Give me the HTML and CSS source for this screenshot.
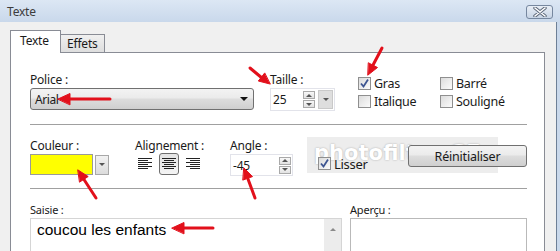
FILE: index.html
```html
<!DOCTYPE html>
<html lang="fr">
<head>
    <meta charset="UTF-8">
    <title>Texte</title>
    <link rel="stylesheet" href="styles.css">
</head>
<body>
    <div class="window">
        <div class="titlebar">
            <span class="title">Texte</span>
            <span class="close">
                <svg width="14" height="10" viewBox="0 0 14 10">
                    <path d="M2 1 L12 9 M12 1 L2 9" stroke="#5a6678" stroke-width="3.4" stroke-linecap="round"/>
                    <path d="M2 1 L12 9 M12 1 L2 9" stroke="#fff" stroke-width="1.6" stroke-linecap="round"/>
                </svg>
            </span>
        </div>
        <div class="tabs">
            <div class="tab active">Texte</div>
            <div class="tab">Effets</div>
        </div>
        <div class="panel">
            <div class="row row-top">
                <div class="field police">
                    <div class="label">Police :</div>
                    <div class="combo"><span>Arial</span><span class="caret"></span></div>
                </div>
                <div class="field taille">
                    <div class="label">Taille :</div>
                    <div class="spinbox">
                        <span class="value">25</span>
                        <span class="spin">
                            <span class="spin-btn"><span class="tri up"></span></span>
                            <span class="spin-btn"><span class="tri down"></span></span>
                        </span>
                        <span class="drop-btn"><span class="tri down"></span></span>
                    </div>
                </div>
                <div class="checks">
                    <div class="check-col">
                        <div class="check"><span class="box"><svg width="11" height="11" viewBox="0 0 11 11"><path d="M2 5.5 L4.5 8.5 L9 1.5" fill="none" stroke="#3d5591" stroke-width="1.8"/></svg></span>Gras</div>
                        <div class="check"><span class="box"></span>Italique</div>
                    </div>
                    <div class="check-col">
                        <div class="check"><span class="box"></span>Barré</div>
                        <div class="check"><span class="box"></span>Souligné</div>
                    </div>
                </div>
            </div>
            <div class="sep"></div>
            <div class="row row-mid">
                <div class="field couleur">
                    <div class="label">Couleur :</div>
                    <div class="color-pick">
                        <span class="swatch"></span>
                        <span class="color-btn"><span class="tri down"></span></span>
                    </div>
                </div>
                <div class="field align">
                    <div class="label">Alignement :</div>
                    <div class="align-btns">
                        <span class="align-btn">
                            <svg width="14" height="12" viewBox="0 0 14 12"><path d="M0 .5h14M0 2.5h10M0 4.5h14M0 6.5h10M0 8.5h14M0 10.5h10" stroke="#222"/></svg>
                        </span>
                        <span class="align-btn pressed">
                            <svg width="14" height="12" viewBox="0 0 14 12"><path d="M0 .5h14M2 2.5h10M0 4.5h14M2 6.5h10M0 8.5h14M2 10.5h10" stroke="#222"/></svg>
                        </span>
                        <span class="align-btn">
                            <svg width="14" height="12" viewBox="0 0 14 12"><path d="M0 .5h14M4 2.5h10M0 4.5h14M4 6.5h10M0 8.5h14M4 10.5h10" stroke="#222"/></svg>
                        </span>
                    </div>
                </div>
                <div class="field angle">
                    <div class="label">Angle :</div>
                    <div class="spinbox angle-box">
                        <span class="value">-45</span>
                        <span class="spin">
                            <span class="spin-btn"><span class="tri up"></span></span>
                            <span class="spin-btn"><span class="tri down"></span></span>
                        </span>
                    </div>
                </div>
                <div class="check lisser"><span class="box"><svg width="11" height="11" viewBox="0 0 11 11"><path d="M2 5.5 L4.5 8.5 L9 1.5" fill="none" stroke="#3d5591" stroke-width="1.8"/></svg></span>Lisser</div>
                <div class="button">Réinitialiser</div>
            </div>
            <div class="sep sep2"></div>
            <div class="row row-bottom">
                <div class="field saisie">
                    <div class="label small">Saisie :</div>
                    <div class="textarea">
                        <span class="text">coucou les enfants</span>
                        <span class="scrollbar"><span class="tri up"></span></span>
                    </div>
                </div>
                <div class="field apercu">
                    <div class="label small">Aperçu :</div>
                    <div class="preview"></div>
                </div>
            </div>
        </div>
        <div class="frame"></div>

        <!-- filigrane -->
        <div class="watermark">photofiltre-GE</div>

        <!-- fleches rouges -->
        <svg class="arrows" width="560" height="251" viewBox="0 0 560 251">
            <g stroke="#e2101b" stroke-width="3" stroke-linecap="round" fill="#e2101b">
                <line x1="110" y1="99" x2="68" y2="99"/>
                <polygon points="58,99 70,93.5 70,104.5" stroke-width="1"/>
                <line x1="250" y1="68" x2="262" y2="78"/>
                <polygon points="270,84 258.3,81 264.5,73.2" stroke-width="1"/>
                <line x1="382" y1="48" x2="372" y2="67"/>
                <polygon points="368,75 377.5,67.5 368.6,62.9" stroke-width="1"/>
                <line x1="96" y1="198" x2="83" y2="178"/>
                <polygon points="78,170 88.2,176.5 79.8,182" stroke-width="1"/>
                <line x1="255" y1="198" x2="248" y2="179"/>
                <polygon points="244,168 252.5,176.6 243.1,180" stroke-width="1"/>
                <line x1="213" y1="228" x2="182" y2="228"/>
                <polygon points="172,228 184,222.5 184,233.5" stroke-width="1"/>
            </g>
        </svg>
    </div>
</body>
</html>
```

FILE: styles.css
```css
*{
    padding: 0;
    margin: 0;
    box-sizing: border-box;
}
body{
    background: #f0f0f0;
    font-family: "Noto Sans", "DejaVu Sans", sans-serif;
    font-size: 12px;
    letter-spacing: -0.2px;
    color: #1a1a1a;
}
.window{
    position: relative;
    width: 560px;
    height: 251px;
    overflow: hidden;
    background: #f0f0f0;
}

/* barre de titre */
.titlebar{
    display: flex;
    align-items: center;
    justify-content: space-between;
    height: 22px;
    padding: 0 7px 0 7px;
    background: linear-gradient(#dce7f4, #c9d8eb);
}
.titlebar .title{
    color: #3c3c3c;
    line-height: 15px;
}
.titlebar .close{
    display: flex;
    align-items: center;
    justify-content: center;
    width: 27px;
    height: 14px;
    margin-top: 2px;
    border: 1px solid #76879f;
    border-radius: 3px;
    background: linear-gradient(#e8eef6, #c7d4e5);
}

/* onglets */
.tabs{
    display: flex;
    align-items: flex-end;
    height: 30px;
    padding-left: 10px;
}
.tab{
    height: 18px;
    width: 44px;
    padding-left: 6px;
    line-height: 17px;
    border: 1px solid #898c95;
    border-left: none;
    border-bottom: none;
    background: linear-gradient(#f0f0f0, #dedede);
}
.tab.active{
    position: relative;
    z-index: 1;
    width: 51px;
    height: 23px;
    margin-bottom: -1px;
    padding-left: 9px;
    line-height: 19px;
    border-left: 1px solid #898c95;
    background: #fff;
}

/* panneau */
.panel{
    width: 535px;
    height: 200px;
    margin-left: 10px;
    padding: 19px 17px 0 19px;
    border: 1px solid #898c95;
    border-bottom: none;
    background: #fff;
}
.row{
    display: flex;
    align-items: flex-start;
}
.row-top{
    height: 39px;
}
.row-mid{
    height: 36px;
}
.label{
    height: 15px;
    line-height: 15px;
    margin-bottom: 1px;
    white-space: nowrap;
}
.label.small{
    font-size: 11px;
}
.tri{
    display: block;
    width: 0;
    height: 0;
    border-left: 3px solid transparent;
    border-right: 3px solid transparent;
}
.tri.down{
    border-top: 3px solid #555;
}
.tri.up{
    border-bottom: 3px solid #555;
}

/* police */
.police{
    width: 224px;
}
.combo{
    display: flex;
    align-items: center;
    justify-content: space-between;
    height: 22px;
    padding: 0 5px 0 4px;
    border: 1px solid #707070;
    border-radius: 3px;
    letter-spacing: -0.4px;
    background: linear-gradient(#f3f3f3 0%, #ebebeb 45%, #dddddd 50%, #cfcfcf 100%);
}
.combo .caret{
    width: 0;
    height: 0;
    border-left: 4px solid transparent;
    border-right: 4px solid transparent;
    border-top: 4px solid #111;
}

/* taille */
.taille{
    width: 65px;
    margin-left: 16px;
}
.spinbox{
    display: flex;
    align-items: center;
    height: 23px;
    padding-left: 2px;
    border: 1px solid #e2e3ea;
    background: #fff;
}
.spinbox .value{
    flex: 1;
}
.spin{
    display: flex;
    flex-direction: column;
    gap: 1px;
    margin-right: 3px;
}
.spin-btn{
    display: flex;
    align-items: center;
    justify-content: center;
    width: 12px;
    height: 8px;
    border: 1px solid #a9a9a9;
    background: linear-gradient(#f8f8f8, #e2e2e2);
}
.drop-btn{
    display: flex;
    align-items: center;
    justify-content: center;
    width: 15px;
    height: 19px;
    margin-right: 1px;
    border: 1px solid #c9c9c9;
    background: #dedede;
}

/* cases a cocher */
.checks{
    display: flex;
    gap: 14px;
    margin-left: 23px;
    margin-top: 5px;
}
.check-col{
    display: flex;
    flex-direction: column;
    gap: 5px;
    width: 68px;
}
.check{
    display: flex;
    align-items: center;
    height: 13px;
    font-size: 12.5px;
    letter-spacing: -0.3px;
    white-space: nowrap;
}
.check .box{
    display: flex;
    align-items: center;
    justify-content: center;
    flex-shrink: 0;
    width: 13px;
    height: 13px;
    margin-right: 3px;
    border: 1px solid #8f8f8f;
    background: linear-gradient(135deg, #dcdcdc, #fbfbfb);
}

/* separateurs */
.sep{
    height: 1px;
    margin: 13px 0 13px;
    background: #a0a0a0;
}
.sep.sep2{
    margin: 14px 0 13px;
}

/* couleur */
.couleur{
    width: 105px;
}
.color-pick{
    display: flex;
    align-items: center;
    height: 21px;
}
.swatch{
    width: 63px;
    height: 21px;
    border: 1px solid #9a9a9a;
    background: #ffff00;
}
.color-btn{
    display: flex;
    align-items: center;
    justify-content: center;
    width: 14px;
    height: 20px;
    margin-left: 2px;
    border: 1px solid #a8a8a8;
    background: linear-gradient(#f2f2f2, #dcdcdc);
}

/* alignement */
.align{
    width: 95px;
}
.align-btns{
    display: flex;
    align-items: center;
    height: 22px;
    margin-top: -1px;
    gap: 4px;
}
.align-btn{
    display: flex;
    align-items: center;
    justify-content: center;
    width: 20px;
    height: 22px;
}
.align-btn.pressed{
    border: 1px solid #6f6f6f;
    border-radius: 3px;
    background: linear-gradient(#e4e4e4, #f4f4f4);
}

/* angle */
.angle{
    width: 63px;
}
.angle-box{
    height: 22px;
}
.angle-box .spin{
    margin-right: 1px;
}

.lisser{
    position: relative;
    z-index: 2;
    margin-left: 25px;
    margin-top: 19px;
    font-size: 13px;
}
.button{
    position: relative;
    z-index: 2;
    display: flex;
    align-items: center;
    justify-content: center;
    width: 119px;
    height: 22px;
    margin-left: auto;
    margin-top: 7px;
    border: 1px solid #707070;
    border-radius: 3px;
    font-size: 12.5px;
    background: linear-gradient(#f3f3f3 0%, #ebebeb 45%, #dddddd 50%, #cfcfcf 100%);
}

/* saisie / apercu */
.saisie{
    width: 312px;
}
.textarea{
    display: flex;
    justify-content: space-between;
    height: 40px;
    border: 1px solid #d5d5d5;
    background: #fff;
}
.textarea .text{
    padding: 2px 0 0 6px;
    font-family: "Liberation Sans", Arial, sans-serif;
    font-size: 15.5px;
    letter-spacing: 0;
    color: #000;
}
.scrollbar{
    display: flex;
    justify-content: center;
    width: 17px;
    padding-top: 9px;
    background: #ececec;
}
.scrollbar .tri.up{
    border-bottom-color: #8a8a8a;
}
.apercu{
    width: 177px;
    margin-left: 8px;
}
.preview{
    height: 40px;
    border: 1px solid #b9b9b9;
    background: #fff;
}

/* bord de la fenetre */
.frame{
    position: absolute;
    top: 22px;
    right: 0;
    bottom: 0;
    width: 4px;
    border-left: 1px solid #6d7f96;
    background: #c9d8eb;
}

.watermark{
    position: absolute;
    z-index: 1;
    left: 307px;
    top: 137px;
    width: 191px;
    height: 36px;
    padding: 2px 0 0 7px;
    background: rgba(0, 0, 0, 0.07);
    font-family: "DejaVu Sans", sans-serif;
    font-weight: bold;
    font-size: 21px;
    letter-spacing: 0;
    line-height: 28px;
    color: #fff;
    text-shadow: 0 0 2px rgba(0, 0, 0, 0.3);
    white-space: nowrap;
    overflow: hidden;
}
.arrows{
    position: absolute;
    z-index: 3;
    left: 0;
    top: 0;
}
```
